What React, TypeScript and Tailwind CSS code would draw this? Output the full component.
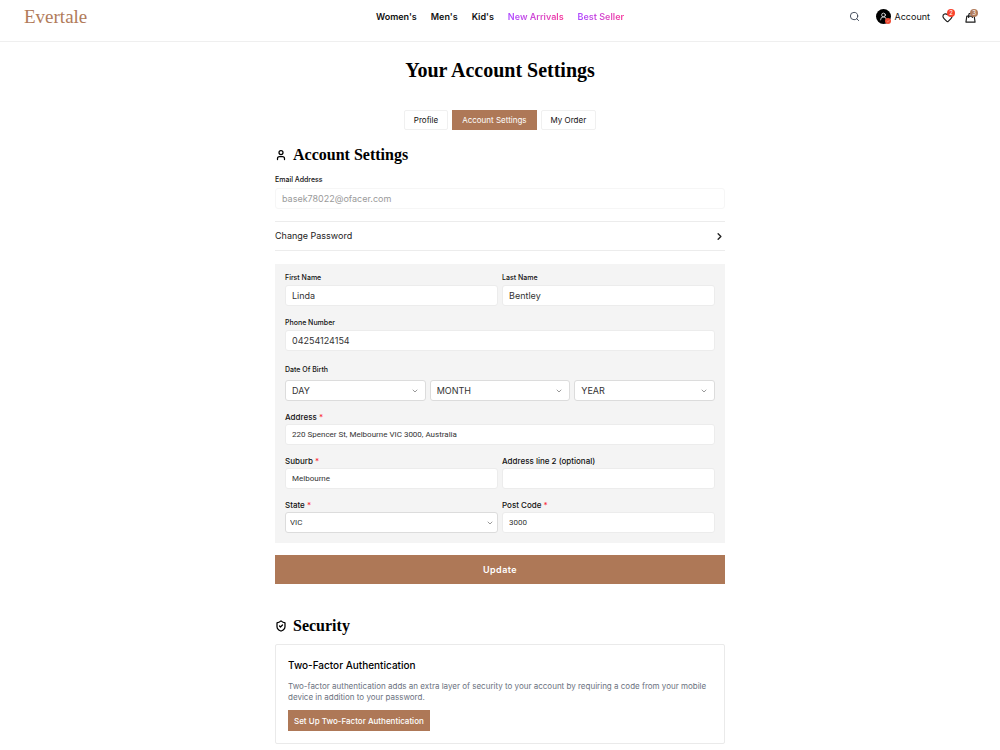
import type { InputHTMLAttributes, ReactNode, SelectHTMLAttributes } from "react";
import { ChevronDown, ChevronRight, Heart, Search, ShieldCheck, User, UserRound } from "lucide-react";
import clsx from "clsx";

const navLinks = [
  { label: "Women's" },
  { label: "Men's" },
  { label: "Kid's" },
  { label: "New Arrivals", accent: true },
  { label: "Best Seller", accent: true },
];

function Header() {
  return (
    <header className="grid grid-cols-[1fr_auto_1fr] items-center border-b border-[#efefef] px-6 pt-1 pb-3">
      <a href="#home" className="font-['Liberation_Serif',serif] text-[19px] leading-[25px] text-[#b17b5a]">
        Evertale
      </a>
      <nav className="flex items-center gap-[14px] text-[9px] font-semibold">
        {navLinks.map((link) => (
          <a
            key={link.label}
            href="#shop"
            className={clsx(
              link.accent && "bg-gradient-to-r from-purple-500 to-pink-500 bg-clip-text text-transparent",
            )}
          >
            {link.label}
          </a>
        ))}
      </nav>
      <div className="flex items-center justify-end">
        <button type="button" aria-label="Search" className="mr-4">
          <Search className="size-[11px] text-[#374151]" strokeWidth={2} />
        </button>
        <a href="#account" className="mr-3 flex items-center gap-1 text-[9px]">
          <span className="relative flex size-[15px] items-center justify-center rounded-full bg-black">
            <UserRound className="size-[9px] text-white" strokeWidth={2} />
            <svg viewBox="0 0 6 6" className="absolute right-0 bottom-0 size-[6px]" aria-hidden="true">
              <circle cx="3" cy="3" r="3" fill="#f04b35" />
              <path d="M1.7 3.1 2.7 4 4.4 2.1" fill="none" stroke="#ffb4a5" strokeWidth="0.6" />
            </svg>
          </span>
          Account
        </a>
        <a href="#wishlist" aria-label="Wishlist" className="relative mr-3 block">
          <Heart className="mt-0.5 size-[11px] text-[#1c1c1c]" strokeWidth={2.5} />
          <Badge className="bg-[#f9432e]">2</Badge>
        </a>
        <a href="#bag" aria-label="Shopping bag" className="relative block">
          <BagIcon />
          <Badge className="bg-[#b17b5a]">3</Badge>
        </a>
      </div>
    </header>
  );
}

function BagIcon() {
  return (
    <svg
      viewBox="0 0 24 24"
      className="mt-0.5 size-[11px] text-[#1c1c1c]"
      fill="none"
      stroke="currentColor"
      strokeWidth="2.5"
      strokeLinejoin="round"
      aria-hidden="true"
    >
      <path d="M4 9h16l2 13H2Z" />
      <path d="M8 12V7a4 4 0 0 1 8 0v5" strokeLinecap="round" />
    </svg>
  );
}

function Badge({ className, children }: { className: string; children: ReactNode }) {
  return (
    <span
      className={clsx(
        "absolute -top-px -right-0.5 flex size-2 items-center justify-center rounded-full text-[6px] leading-none text-white",
        className,
      )}
    >
      {children}
    </span>
  );
}

function SectionHeading({ icon, children }: { icon: ReactNode; children: ReactNode }) {
  return (
    <h2 className="flex items-center gap-1.5 font-['Liberation_Serif',serif] text-[16px] leading-5 font-bold text-black">
      {icon}
      {children}
    </h2>
  );
}

function Label({ id, large, required, children }: { id: string; large?: boolean; required?: boolean; children: ReactNode }) {
  return (
    <label
      htmlFor={id}
      className={clsx("block font-medium text-[#111]", large ? "text-[8px] leading-3" : "text-[7px] leading-[14px]")}
    >
      {children}
      {required && <span className="text-red-500"> *</span>}
    </label>
  );
}

function TextInput({ small, ...props }: InputHTMLAttributes<HTMLInputElement> & { small?: boolean }) {
  return (
    <input
      {...props}
      className={clsx(
        "block h-[21px] w-full rounded-[3px] border border-[#ececec] bg-white px-1.5 text-[#333] outline-none disabled:border-[#f6f6f6] disabled:text-[#9a9a9a]",
        small ? "font-['Roboto','Inter',sans-serif] text-[8px]" : "text-[9px]",
      )}
    />
  );
}

function SelectBox({ small, children, ...props }: SelectHTMLAttributes<HTMLSelectElement> & { small?: boolean }) {
  return (
    <div className="relative">
      <select
        {...props}
        className={clsx(
          "block h-[21px] w-full appearance-none rounded-[3px] border border-[#dcdcdc] bg-white text-[#333] outline-none",
          small ? "px-1 font-['Roboto','Inter',sans-serif] text-[8px]" : "px-1.5 text-[9px]",
        )}
      >
        {children}
      </select>
      <ChevronDown
        className={clsx("pointer-events-none absolute top-[7px] size-2 text-[#666]", small ? "right-1" : "right-[7px]")}
        strokeWidth={2}
      />
    </div>
  );
}

function AddressField({ id, label, required, children }: { id: string; label: string; required?: boolean; children: ReactNode }) {
  return (
    <div>
      <Label id={id} large required={required}>
        {label}
      </Label>
      <div className="mt-px">{children}</div>
    </div>
  );
}

export default function App() {
  return (
    <div className="bg-white font-['Inter',sans-serif] text-[#111]">
      <Header />
      <main className="mx-auto w-full max-w-[450px] pb-1.5">
        <h1 className="mt-[14px] text-center font-['Liberation_Serif',serif] text-[20px] leading-7 font-bold text-black">
          Your Account Settings
        </h1>

        <div className="mt-[26px] flex justify-center gap-1 text-[8px] leading-[18px]">
          <button type="button" className="rounded-[2px] border border-[#f0f0f0] px-[9px]">
            Profile
          </button>
          <button type="button" className="border border-[#ae7857] bg-[#ae7857] px-[9px] text-white">
            Account Settings
          </button>
          <button type="button" className="rounded-[2px] border border-[#f0f0f0] px-[9px]">
            My Order
          </button>
        </div>

        <section className="mt-[15px]">
          <SectionHeading icon={<User className="size-3" strokeWidth={2.5} />}>Account Settings</SectionHeading>

          <form onSubmit={(event) => event.preventDefault()}>
            <div className="mt-2">
              <Label id="email">Email Address</Label>
              <div className="mt-px">
                <TextInput id="email" type="email" defaultValue="basek78022@ofacer.com" disabled />
              </div>
            </div>

            <button
              type="button"
              className="mt-3 flex h-[30px] w-full items-center justify-between border-y border-[#ececec] text-[9px] text-[#222]"
            >
              Change Password
              <ChevronRight className="size-[11px]" strokeWidth={3} />
            </button>

            <div className="mt-[13px] bg-[#f4f4f4] px-2.5 pt-[7px] pb-2.5">
              <div className="grid grid-cols-2 gap-1">
                <div>
                  <Label id="first-name">First Name</Label>
                  <TextInput id="first-name" defaultValue="Linda" />
                </div>
                <div>
                  <Label id="last-name">Last Name</Label>
                  <TextInput id="last-name" defaultValue="Bentley" />
                </div>
              </div>

              <div className="mt-[10px]">
                <Label id="phone">Phone Number</Label>
                <TextInput id="phone" type="tel" defaultValue="04254124154" />
              </div>

              <div className="mt-3" role="group" aria-labelledby="birth-label">
                <span id="birth-label" className="block text-[7px] leading-[14px] font-medium">
                  Date Of Birth
                </span>
                <div className="mt-[3px] grid grid-cols-3 gap-1">
                  <SelectBox aria-label="Day">
                    <option>DAY</option>
                  </SelectBox>
                  <SelectBox aria-label="Month">
                    <option>MONTH</option>
                  </SelectBox>
                  <SelectBox aria-label="Year">
                    <option>YEAR</option>
                  </SelectBox>
                </div>
              </div>

              <div className="mt-[10px] grid gap-[10px]">
                <AddressField id="address" label="Address" required>
                  <TextInput id="address" small defaultValue="220 Spencer St, Melbourne VIC 3000, Australia" />
                </AddressField>
                <div className="grid grid-cols-2 gap-x-1 gap-y-[10px]">
                  <AddressField id="suburb" label="Suburb" required>
                    <TextInput id="suburb" small defaultValue="Melbourne" />
                  </AddressField>
                  <AddressField id="address-2" label="Address line 2 (optional)">
                    <TextInput id="address-2" small />
                  </AddressField>
                  <AddressField id="state" label="State" required>
                    <SelectBox id="state" small>
                      <option>VIC</option>
                    </SelectBox>
                  </AddressField>
                  <AddressField id="postcode" label="Post Code" required>
                    <TextInput id="postcode" small defaultValue="3000" />
                  </AddressField>
                </div>
              </div>
            </div>

            <button
              type="submit"
              className="mt-3 h-[29px] w-full bg-[#ae7857] text-[9px] font-semibold tracking-wider text-white"
            >
              Update
            </button>
          </form>
        </section>

        <section className="mt-8">
          <SectionHeading icon={<ShieldCheck className="size-3" strokeWidth={2.5} />}>Security</SectionHeading>
          <div className="mt-2 rounded-[2px] border border-[#eaeaea] p-3">
            <h3 className="text-[10px] leading-4 font-medium text-black">Two-Factor Authentication</h3>
            <p className="mt-2 text-[8px] leading-[11px] text-[#6b7280]">
              Two-factor authentication adds an extra layer of security to your account by requiring a code from your
              mobile device in addition to your password.
            </p>
            <button
              type="button"
              className="mt-[7px] block h-[21px] bg-[#ae7857] px-[6px] text-[8px] font-medium text-white"
            >
              Set Up Two-Factor Authentication
            </button>
          </div>
        </section>
      </main>
    </div>
  );
}
